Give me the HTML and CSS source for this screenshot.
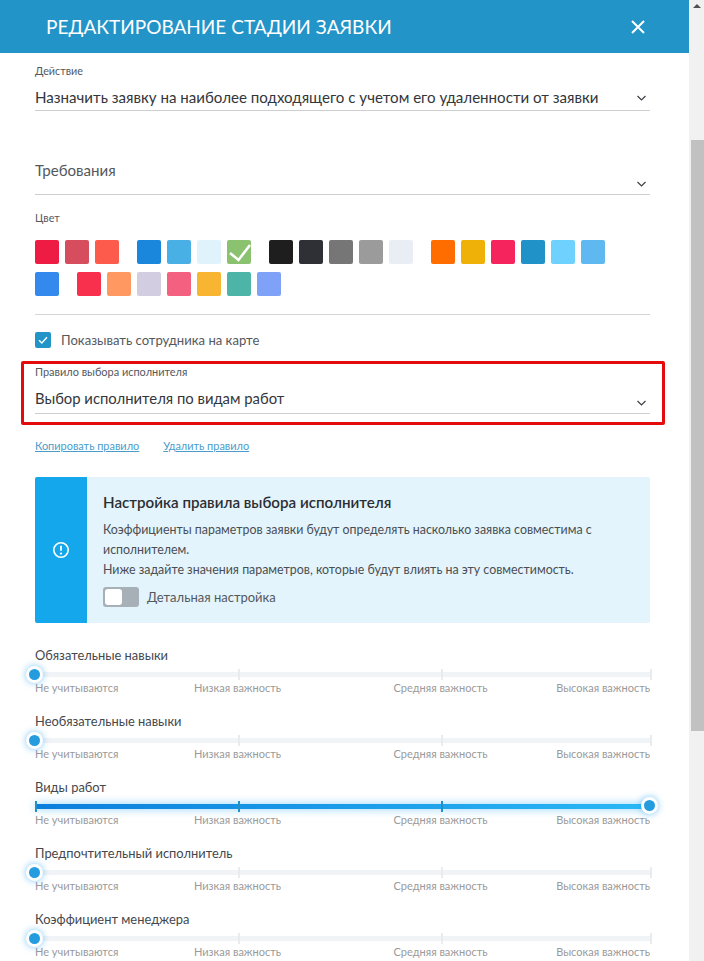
FILE: index.html
```html
<!DOCTYPE html>
<html lang="ru">
<head>
<meta charset="utf-8">
<title>Редактирование стадии заявки</title>
<link rel="stylesheet" href="styles.css">
</head>
<body>
<div class="window">
  <main class="panel">
    <header class="head">
      <h1 class="head-title">РЕДАКТИРОВАНИЕ СТАДИИ ЗАЯВКИ</h1>
      <svg class="head-close" width="14" height="14" viewBox="0 0 14 14"><path d="M1 1l12 12M13 1L1 13" fill="none" stroke="#fff" stroke-width="2"/></svg>
    </header>
    <div class="body">
      <section class="select select-action">
        <div class="small-label">Действие</div>
        <div class="select-row">
          <span class="select-value">Назначить заявку на наиболее подходящего с учетом его удаленности от заявки</span>
          <svg class="chevron" width="9" height="6" viewBox="0 0 9 6"><path d="M.5 1l4 4 4-4" fill="none" stroke="#3c4046" stroke-width="1.2"/></svg>
        </div>
      </section>
      <section class="select select-req">
        <div class="select-row select-row-req">
          <span class="select-value placeholder">Требования</span>
          <svg class="chevron chevron-low" width="9" height="6" viewBox="0 0 9 6"><path d="M.5 1l4 4 4-4" fill="none" stroke="#3c4046" stroke-width="1.2"/></svg>
        </div>
      </section>
      <section class="colors">
        <div class="small-label">Цвет</div>
        <div class="swatches">
          <div class="group"><i class="sw c1"></i><i class="sw c2"></i><i class="sw c3"></i></div>
          <div class="group"><i class="sw c4"></i><i class="sw c5"></i><i class="sw c6"></i><i class="sw c7"><svg width="24" height="24" viewBox="0 0 24 24"><path d="M3 13l8.5 7L23 5" fill="none" stroke="#fff" stroke-width="2.6"/></svg></i></div>
          <div class="group"><i class="sw c8"></i><i class="sw c9"></i><i class="sw c10"></i><i class="sw c11"></i><i class="sw c12"></i></div>
          <div class="group"><i class="sw c13"></i><i class="sw c14"></i><i class="sw c15"></i><i class="sw c16"></i><i class="sw c17"></i><i class="sw c18"></i></div>
          <div class="group"><i class="sw c19"></i></div>
          <div class="group"><i class="sw c20"></i><i class="sw c21"></i><i class="sw c22"></i><i class="sw c23"></i><i class="sw c24"></i><i class="sw c25"></i><i class="sw c26"></i></div>
        </div>
      </section>
      <label class="check">
        <span class="check-box"><svg width="16" height="16" viewBox="0 0 16 16"><path d="M4 8.2l2.8 2.8L12 5.2" fill="none" stroke="#fff" stroke-width="1.4"/></svg></span>
        <span class="check-text">Показывать сотрудника на карте</span>
      </label>
      <section class="rule">
        <div class="small-label">Правило выбора исполнителя</div>
        <div class="select-row select-row-rule">
          <span class="select-value">Выбор исполнителя по видам работ</span>
          <svg class="chevron" width="9" height="6" viewBox="0 0 9 6"><path d="M.5 1l4 4 4-4" fill="none" stroke="#3c4046" stroke-width="1.2"/></svg>
        </div>
      </section>
      <nav class="links"><a class="link">Копировать правило</a><a class="link">Удалить правило</a></nav>
      <section class="info">
        <div class="info-side">
          <svg width="18" height="18" viewBox="0 0 18 18"><circle cx="9" cy="9" r="7.2" fill="none" stroke="#fff" stroke-width="1.6"/><path d="M9 4.8v5" stroke="#fff" stroke-width="1.8"/><circle cx="9" cy="12.6" r="1.1" fill="#fff"/></svg>
        </div>
        <div class="info-main">
          <h2 class="info-title">Настройка правила выбора исполнителя</h2>
          <p class="info-text">Коэффициенты параметров заявки будут определять насколько заявка совместима с исполнителем.<br>Ниже задайте значения параметров, которые будут влиять на эту совместимость.</p>
          <div class="toggle-row"><span class="toggle"><span class="knob"></span></span><span class="toggle-text">Детальная настройка</span></div>
        </div>
      </section>
      <section class="sliders">
        <div class="slider">
          <div class="slider-name">Обязательные навыки</div>
          <div class="track"><i class="tick t1"></i><i class="tick t2"></i><i class="tick t3"></i><i class="thumb"></i></div>
          <div class="scale"><span>Не учитываются</span><span>Низкая важность</span><span>Средняя важность</span><span>Высокая важность</span></div>
        </div>
        <div class="slider">
          <div class="slider-name">Необязательные навыки</div>
          <div class="track"><i class="tick t1"></i><i class="tick t2"></i><i class="tick t3"></i><i class="thumb"></i></div>
          <div class="scale"><span>Не учитываются</span><span>Низкая важность</span><span>Средняя важность</span><span>Высокая важность</span></div>
        </div>
        <div class="slider">
          <div class="slider-name">Виды работ</div>
          <div class="track track-full"><i class="tick t0"></i><i class="tick t1"></i><i class="tick t2"></i><i class="thumb thumb-end"></i></div>
          <div class="scale"><span>Не учитываются</span><span>Низкая важность</span><span>Средняя важность</span><span>Высокая важность</span></div>
        </div>
        <div class="slider">
          <div class="slider-name">Предпочтительный исполнитель</div>
          <div class="track"><i class="tick t1"></i><i class="tick t2"></i><i class="tick t3"></i><i class="thumb"></i></div>
          <div class="scale"><span>Не учитываются</span><span>Низкая важность</span><span>Средняя важность</span><span>Высокая важность</span></div>
        </div>
        <div class="slider">
          <div class="slider-name">Коэффициент менеджера</div>
          <div class="track"><i class="tick t1"></i><i class="tick t2"></i><i class="tick t3"></i><i class="thumb"></i></div>
          <div class="scale"><span>Не учитываются</span><span>Низкая важность</span><span>Средняя важность</span><span>Высокая важность</span></div>
        </div>
      </section>
    </div>
  </main>
  <aside class="scrollbar">
    <span class="sb-arrow"></span>
    <span class="sb-thumb"></span>
  </aside>
</div>
</body>
</html>
```

FILE: styles.css
```css
* { box-sizing: border-box; }
html, body { margin: 0; height: 961px; overflow: hidden; background: #fff; }
body { font-family: Lato, "Open Sans", sans-serif; color: #33363b; }
.window { display: flex; height: 961px; overflow: hidden; }
.panel { width: 689px; flex: none; }
.scrollbar { flex: 1; background: #f1f1f1; padding-left: 2px; position: relative; }
.sb-arrow { display: block; position: absolute; left: 4px; top: 4px; border: 4px solid transparent; border-top: 0; border-bottom: 4px solid #505050; }
.sb-thumb { display: block; margin-top: 140px; height: 591px; background: #c1c1c1; }

.head { height: 53px; background: #2394c8; display: flex; align-items: center; justify-content: space-between; padding: 0 44px 0 46px; }
.head-title { margin: 0; font-size: 19.03px; font-weight: 400; color: #fff; line-height: 1; }
.body { padding: 0 39px 0 35px; }

.small-label { font-size: 10.8px; line-height: 14px; color: #55585d; }
.select-action { padding-top: 11px; }
.select-row { display: flex; justify-content: space-between; align-items: center; border-bottom: 1px solid #cfcfcf; }
.select-action .select-row { height: 33px; padding-top: 5px; }
.select-value { font-size: 15.1px; line-height: 20px; color: #33363b; white-space: nowrap; }
.placeholder { color: #55585d; }
.chevron { margin-right: 4px; margin-top: 3px; flex: none; }
.select-req { padding-top: 49px; }
.select-row-req { height: 35px; align-items: flex-start; }
.chevron-low { margin-top: 21px; }

.colors { padding-top: 16px; }
.swatches { display: flex; flex-wrap: wrap; margin-top: 15px; row-gap: 8px; padding-bottom: 18px; border-bottom: 1px solid #d5d5d5; }
.group { display: flex; gap: 6px; margin-right: 18px; }
.sw { display: block; width: 24px; height: 24px; border-radius: 2px; }
.sw svg { display: block; }
.c1 { background: #ee1b44; } .c2 { background: #d64d5d; } .c3 { background: #fd5b4c; }
.c4 { background: #1b87dc; } .c5 { background: #48b0e4; } .c6 { background: #e0f3fd; } .c7 { background: #8ac270; }
.c8 { background: #1e1e1e; } .c9 { background: #2f3035; } .c10 { background: #767676; } .c11 { background: #9b9b9b; } .c12 { background: #e9eef5; }
.c13 { background: #ff6d00; } .c14 { background: #efb008; } .c15 { background: #f5245c; } .c16 { background: #2192c8; } .c17 { background: #6fd2fe; } .c18 { background: #5fb9f0; }
.c19 { background: #338aec; }
.c20 { background: #f8304e; } .c21 { background: #ff9961; } .c22 { background: #d3cde2; } .c23 { background: #f4607f; } .c24 { background: #f8b531; } .c25 { background: #4db5a8; } .c26 { background: #7fa2f8; }

.check { display: flex; align-items: center; margin-top: 17px; gap: 10px; }
.check-box { width: 16px; height: 16px; background: #2394c8; border-radius: 2px; display: block; }
.check-box svg { display: block; }
.check-text { font-size: 13.1px; line-height: 16px; color: #55585d; }

.rule { margin: 13px -15px 0 -14px; border: 3px solid #e30b0b; border-radius: 2px; height: 64px; padding: 1px 12px 0 11px; }
.rule .small-label { font-size: 10.95px; }
.select-row-rule { height: 35px; padding-top: 4px; }
.rule .select-value { font-size: 14.85px; }
.rule .chevron { margin-top: 9px; }

.links { display: flex; gap: 24px; margin-top: 13px; height: 16px; }
.link { font-size: 10.95px; line-height: 16px; color: #4a9ccb; text-decoration: underline; }

.info { display: flex; height: 146px; margin-top: 23px; border-radius: 2px; overflow: hidden; background: #e4f4fc; }
.info-side { width: 52px; flex: none; background: #15a7ec; display: flex; align-items: center; justify-content: center; }
.info-main { padding: 16px 16px 0; flex: 1; }
.info-title { margin: 0; font-size: 15.15px; line-height: 18px; font-weight: 600; color: #2b2e33; }
.info-text { margin: 9px 0 0; font-size: 12.4px; line-height: 20px; color: #4a4e53; }
.toggle-row { display: flex; align-items: center; gap: 8px; margin-top: 7px; }
.toggle { display: block; width: 36px; height: 20px; border-radius: 3px; background: #a7b0b6; padding: 2px; }
.knob { display: block; width: 17px; height: 16px; background: #fff; border-radius: 3px; }
.toggle-text { font-size: 13px; line-height: 20px; color: #55585d; }

.sliders { margin-top: 23px; }
.slider { height: 66px; }
.slider-name { font-size: 12.9px; line-height: 18px; color: #44484d; }
.track { position: relative; height: 5px; margin-top: 8px; background: #f1f4f7; width: 615px; }
.track-full { background: linear-gradient(90deg, #0b7fdc, #2ab8f5); box-shadow: 0 0 8px rgba(40, 170, 245, .6); }
.tick { position: absolute; top: -3px; width: 2px; height: 11px; background: #e9ecef; }
.track-full .tick { background: #2192c8; }
.t0 { left: 0; } .t1 { left: 203px; } .t2 { left: 406px; } .t3 { left: 615px; }
.thumb { position: absolute; left: -9px; top: -6px; width: 17px; height: 17px; border-radius: 50%; background: #249cdd; border: 3px solid #fff; box-shadow: 0 0 7px rgba(40, 160, 235, .6); }
.thumb-end { left: 606px; top: -7px; }
.scale { display: grid; grid-template-columns: 101px 203px 203px 1fr; margin-top: 4px; font-size: 11px; line-height: 14px; color: #9a9a9a; white-space: nowrap; }
.scale span { text-align: center; }
.scale span:first-child { text-align: left; }
.scale span:last-child { text-align: right; }
```
